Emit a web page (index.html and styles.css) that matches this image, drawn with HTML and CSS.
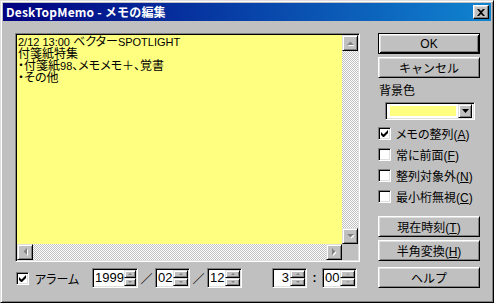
FILE: index.html
```html
<!DOCTYPE html>
<html lang="ja">
<head>
    <meta charset="UTF-8">
    <title>DeskTopMemo - メモの編集</title>
    <link rel="stylesheet" href="styles.css">
</head>
<body>
    <div class="window">
        <div class="titlebar">
            <span class="title">DeskTopMemo - メモの編集</span>
            <button class="close">
                <svg width="8" height="7" viewBox="0 0 8 7"><path d="M0 0h2l2 2 2-2h2L5 3.5 8 7H6L4 5 2 7H0l3-3.5z" fill="#000"/></svg>
            </button>
        </div>

        <div class="body">
            <div class="main">
                <div class="memo">
                    <div class="memo-row">
                        <div class="memo-text"><span class="lat">2/12 13:00 </span>ベクター<span class="lat">SPOTLIGHT</span><br>付箋紙特集<br>・付箋紙<span class="lat">98</span>、メモメモ＋、覚書<br>・その他</div>
                        <div class="vscroll">
                            <div class="sb-btn"><svg width="7" height="5" viewBox="0 0 7 5"><path d="M1 5h7L4.5 1.5z" fill="#fff"/><path d="M0 4h7L3.5 0.5z" fill="#808080"/></svg></div>
                            <div class="track"></div>
                            <div class="sb-btn"><svg width="7" height="5" viewBox="0 0 7 5"><path d="M1 1h7L4.5 4.5z" fill="#fff"/><path d="M0 0h7L3.5 3.5z" fill="#808080"/></svg></div>
                        </div>
                    </div>
                    <div class="hscroll-row">
                        <div class="hscroll">
                            <div class="sb-btn"><svg width="5" height="8" viewBox="0 0 5 8"><path d="M5 1v7L1.5 4.5z" fill="#fff"/><path d="M4 0v7L0.5 3.5z" fill="#808080"/></svg></div>
                            <div class="track"></div>
                            <div class="sb-btn"><svg width="5" height="8" viewBox="0 0 5 8"><path d="M1 1v7l3.5-3.5z" fill="#fff"/><path d="M0 0v7l3.5-3.5z" fill="#808080"/></svg></div>
                        </div>
                        <div class="corner"></div>
                    </div>
                </div>

                <div class="alarm-row">
                    <label class="check alarm"><span class="box checked"></span><span>アラーム</span></label>
                    <div class="spin year"><span class="value">1999</span><span class="spin-btns"><i class="up"></i><i class="down"></i></span></div>
                    <span class="sep">／</span>
                    <div class="spin short"><span class="value">02</span><span class="spin-btns"><i class="up"></i><i class="down"></i></span></div>
                    <span class="sep">／</span>
                    <div class="spin short"><span class="value">12</span><span class="spin-btns"><i class="up"></i><i class="down"></i></span></div>
                    <div class="spin short hour"><span class="value right">3</span><span class="spin-btns"><i class="up"></i><i class="down"></i></span></div>
                    <span class="colon">:</span>
                    <div class="spin short"><span class="value">00</span><span class="spin-btns off"><i class="up"></i><i class="down"></i></span></div>
                </div>
            </div>

            <div class="side">
                <button class="btn default">OK</button>
                <button class="btn cancel">キャンセル</button>
                <div class="label">背景色</div>
                <div class="combo">
                    <span class="swatch"></span>
                    <span class="drop"><svg width="7" height="4" viewBox="0 0 7 4"><path d="M0 0h7L3.5 4z" fill="#000"/></svg></span>
                </div>
                <div class="checks">
                    <label class="check"><span class="box checked"></span><span>メモの整列(<u>A</u>)</span></label>
                    <label class="check"><span class="box"></span><span>常に前面(<u>F</u>)</span></label>
                    <label class="check"><span class="box"></span><span>整列対象外(<u>N</u>)</span></label>
                    <label class="check"><span class="box"></span><span>最小桁無視(<u>C</u>)</span></label>
                </div>
                <button class="btn now">現在時刻(<u>T</u>)</button>
                <button class="btn">半角変換(<u>H</u>)</button>
                <button class="btn help">ヘルプ</button>
            </div>
        </div>
    </div>
</body>
</html>
```

FILE: styles.css
```css
* {
    margin: 0;
    padding: 0;
    box-sizing: border-box;
}

body {
    font-family: "Liberation Sans", "Noto Sans CJK JP", sans-serif;
    font-size: 12px;
    font-feature-settings: "palt";
    color: #000;
    background: #c0c0c0;
}

.window {
    width: 494px;
    height: 303px;
    background: #c0c0c0;
    border: 1px solid;
    border-color: #dfdfdf #000 #000 #dfdfdf;
    box-shadow: inset 1px 1px #fff, inset -1px -1px #808080;
    padding: 2px;
}

.titlebar {
    height: 18px;
    background: linear-gradient(90deg, #000080, #1084d0);
    display: flex;
    align-items: center;
    justify-content: space-between;
    padding: 0 2px 0 2px;
}

.title {
    color: #fff;
    font-family: "Noto Sans CJK JP", sans-serif;
    font-feature-settings: normal;
    font-weight: bold;
    font-size: 12px;
    line-height: 18px;
    padding-left: 1px;
    letter-spacing: 0.2px;
}

.close {
    width: 16px;
    height: 14px;
    background: #c0c0c0;
    border: 1px solid;
    border-color: #fff #000 #000 #fff;
    box-shadow: inset -1px -1px #808080, inset 1px 1px #dfdfdf;
    display: flex;
    align-items: center;
    justify-content: center;
}

.body {
    display: flex;
    gap: 18px;
    padding: 12px 0 0 12px;
}

.main {
    width: 345px;
    display: flex;
    flex-direction: column;
    gap: 6px;
}

/* sunken text area */
.memo {
    height: 229px;
    border: 1px solid;
    border-color: #808080 #fff #fff #808080;
    box-shadow: inset 1px 1px #000, inset -1px -1px #dfdfdf;
    padding: 1px;
    display: flex;
    flex-direction: column;
}

.memo-row {
    flex: 1;
    display: flex;
}

.memo-text {
    flex: 1;
    background: #ffff80;
    padding: 1px 0 0 1px;
    line-height: 12px;
    white-space: pre;
}

.memo-text .lat {
    font-size: 11px;
}

.vscroll {
    width: 16px;
    display: flex;
    flex-direction: column;
}

.hscroll-row {
    height: 16px;
    display: flex;
}

.hscroll {
    flex: 1;
    display: flex;
}

.corner {
    width: 16px;
    background: #c0c0c0;
}

.track {
    flex: 1;
    background: repeating-conic-gradient(#c0c0c0 0 25%, #fff 0 50%) 0 0 / 2px 2px;
}

.sb-btn {
    width: 16px;
    height: 16px;
    background: #c0c0c0;
    border: 1px solid;
    border-color: #dfdfdf #000 #000 #dfdfdf;
    box-shadow: inset 1px 1px #fff, inset -1px -1px #808080;
    display: flex;
    align-items: center;
    justify-content: center;
}

/* bottom row */
.alarm-row {
    height: 20px;
    display: flex;
    align-items: center;
}

.check {
    display: flex;
    align-items: center;
    gap: 5px;
    white-space: nowrap;
}

.check u {
    text-decoration: underline;
}

.box {
    width: 13px;
    height: 13px;
    background: #fff;
    border: 1px solid;
    border-color: #808080 #fff #fff #808080;
    box-shadow: inset 1px 1px #000, inset -1px -1px #dfdfdf;
    flex: none;
}

.box.checked {
    background: #fff url("data:image/svg+xml,%3Csvg xmlns='http://www.w3.org/2000/svg' width='7' height='7'%3E%3Cpath d='M0 2v3l2 2h1l4-4V0L2.5 4.5z' fill='%23000'/%3E%3C/svg%3E") center / 7px 7px no-repeat;
}

.alarm {
    margin-left: 1px;
    gap: 6px;
    width: 76px;
}

.spin {
    height: 20px;
    background: #fff;
    border: 1px solid;
    border-color: #808080 #fff #fff #808080;
    box-shadow: inset 1px 1px #000, inset -1px -1px #dfdfdf;
    padding: 1px;
    display: flex;
    align-items: center;
}

.spin.year {
    width: 46px;
}

.spin.short {
    width: 35px;
}

.spin.hour {
    margin-left: 30px;
}

.value {
    flex: 1;
    padding-left: 1px;
    line-height: 16px;
    font-size: 13px;
}

.value.right {
    text-align: right;
    padding-right: 1px;
}

.spin-btns {
    width: 15px;
    height: 16px;
    display: flex;
    flex-direction: column;
}

.spin-btns i {
    flex: 1;
    background: #c0c0c0;
    border: 1px solid;
    border-color: #dfdfdf #000 #000 #dfdfdf;
    box-shadow: inset 1px 1px #fff, inset -1px -1px #808080;
    display: flex;
    align-items: center;
    justify-content: center;
}

.spin-btns i::before {
    content: "";
    border-left: 2px solid transparent;
    border-right: 2px solid transparent;
}

.spin-btns .up::before {
    border-bottom: 2px solid #808080;
}

.spin-btns .down::before {
    border-top: 2px solid #808080;
}

.spin-btns.off i::before {
    border-bottom-color: #a0a0a0;
    border-top-color: #a0a0a0;
}

.sep {
    width: 17px;
    text-align: center;
    font-family: "Noto Sans CJK JP", sans-serif;
    font-feature-settings: normal;
}

.colon {
    width: 15px;
    text-align: center;
    font-weight: bold;
}

/* right column */
.side {
    width: 102px;
    display: flex;
    flex-direction: column;
}

.btn {
    width: 102px;
    height: 21px;
    font-family: inherit;
    font-size: 12px;
    color: #000;
    background: #c0c0c0;
    border: 1px solid;
    border-color: #fff #000 #000 #fff;
    box-shadow: inset 1px 1px #dfdfdf, inset -1px -1px #808080;
}

.btn.default {
    border: 1px solid #000;
    box-shadow: inset 1px 1px #fff, inset -1px -1px #000, inset 2px 2px #dfdfdf, inset -2px -2px #808080;
}

.btn.cancel {
    margin-top: 3px;
}

.label {
    margin-top: 6px;
    padding-left: 1px;
    line-height: 14px;
}

.combo {
    margin: 4px 0 0 7px;
    width: 90px;
    height: 18px;
    background: #fff;
    border: 1px solid;
    border-color: #808080 #fff #fff #808080;
    box-shadow: inset 1px 1px #000, inset -1px -1px #dfdfdf;
    padding: 2px 2px 2px 4px;
    display: flex;
    align-items: center;
    gap: 2px;
}

.swatch {
    flex: 1;
    height: 10px;
    background: #ffff80;
}

.drop {
    width: 14px;
    height: 14px;
    background: #c0c0c0;
    border: 1px solid;
    border-color: #dfdfdf #000 #000 #dfdfdf;
    box-shadow: inset 1px 1px #fff, inset -1px -1px #808080;
    display: flex;
    align-items: center;
    justify-content: center;
}

.checks {
    margin-top: 3px;
    display: flex;
    flex-direction: column;
}

.checks .check {
    height: 21px;
}

.btn.now {
    margin-top: 9px;
}

.btn + .btn {
    margin-top: 3px;
}

.btn.help {
    margin-top: 6px;
}
```
